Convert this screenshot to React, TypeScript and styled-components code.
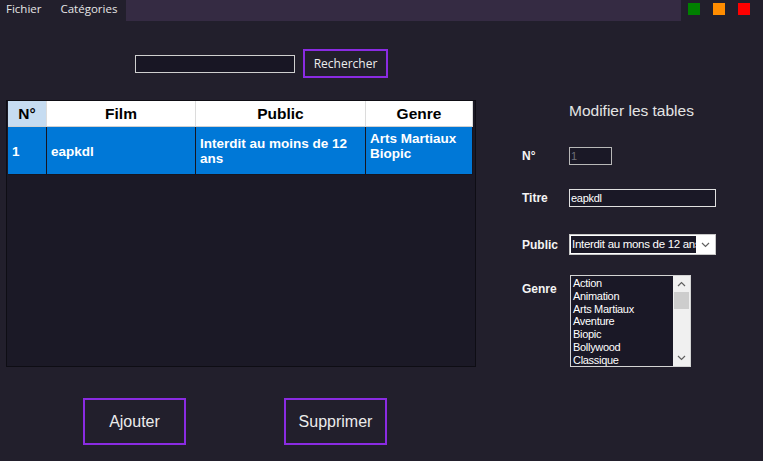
import React from "react";
import styled, { createGlobalStyle } from "styled-components";

const GlobalStyle = createGlobalStyle`
  html, body { margin: 0; padding: 0; background: #221f2c; }
  * { box-sizing: border-box; }
`;

const Window = styled.div`
  width: 763px;
  height: 461px;
  overflow: hidden;
  background: #221f2c;
  font-family: "Liberation Sans", Arial, sans-serif;
  color: #f0f0f0;
  display: flex;
  flex-direction: column;
`;

const MenuBar = styled.div`
  display: flex;
  height: 21px;
  flex-shrink: 0;
`;

const Menu = styled.nav`
  width: 126px;
  display: flex;
  gap: 19px;
  padding-left: 6px;
  font-family: "Open Sans", "Noto Sans", sans-serif;
  font-size: 11.5px;
  line-height: 17px;
  color: #e6e6e6;
`;

const MenuItem = styled.span``;

const TitleStrip = styled.div`
  width: 555px;
  background: #352b43;
`;

const Controls = styled.div`
  display: flex;
  gap: 13px;
  padding: 3px 0 0 7px;
`;

const Square = styled.span<{ $c: string }>`
  width: 12px;
  height: 12px;
  background: ${(p) => p.$c};
`;

const Body = styled.div`
  flex: 1;
  display: grid;
  grid-template-columns: 522px 1fr;
`;

const LeftCol = styled.div`
  padding-left: 6px;
  display: flex;
  flex-direction: column;
`;

const SearchRow = styled.div`
  margin-top: 28px;
  padding-left: 129px;
  display: flex;
  align-items: center;
  gap: 8px;
`;

const SearchInput = styled.div`
  width: 160px;
  height: 18px;
  background: #181624;
  border: 1px solid #cfcfcf;
`;

const SmallButton = styled.button`
  width: 85px;
  height: 29px;
  background: #221f2c;
  border: 2px solid #8a2be2;
  color: #ececec;
  font-family: "Open Sans", "Noto Sans", sans-serif;
  font-size: 12px;
  padding: 0;
`;

const Grid = styled.div`
  margin-top: 22px;
  width: 470px;
  height: 267px;
  background: #1b1926;
  border: 1px solid #0e0d14;
  padding: 0 2px 0 1px;
`;

const Row = styled.div`
  display: grid;
  grid-template-columns: 39px 149px 170px 107px;
`;

const HeadCell = styled.div<{ $selected?: boolean }>`
  height: 26px;
  background: ${(p) => (p.$selected ? "#c6dcf1" : "#ffffff")};
  border-right: 1px solid #dcdcdc;
  border-bottom: 1px solid #d0d0d0;
  color: #000;
  font-weight: bold;
  font-size: 15.5px;
  display: flex;
  align-items: center;
  justify-content: center;
`;

const Cell = styled.div<{ $top?: boolean }>`
  height: 48px;
  background: #0078d7;
  border-right: 1px solid #16151f;
  border-bottom: 1px solid #16151f;
  color: #ffffff;
  font-weight: bold;
  font-size: 13.5px;
  line-height: 15px;
  padding: ${(p) => (p.$top ? "4px 4px 0 4px" : "1px 4px 0 4px")};
  display: flex;
  align-items: ${(p) => (p.$top ? "flex-start" : "center")};
`;

const ButtonRow = styled.div`
  margin-top: 31px;
  padding-left: 77px;
  display: flex;
  gap: 98px;
`;

const BigButton = styled.button`
  width: 103px;
  height: 47px;
  background: #221f2c;
  border: 2px solid #8a2be2;
  color: #ececec;
  font-family: "Liberation Sans", Arial, sans-serif;
  font-size: 16px;
  padding: 0;
`;

const RightCol = styled.div`
  display: flex;
  flex-direction: column;
`;

const PanelTitle = styled.div`
  margin-top: 81px;
  padding-left: 47px;
  font-size: 15.5px;
  line-height: 18px;
  color: #e4e4e4;
`;

const FormRow = styled.div<{ $mt: number; $top?: boolean }>`
  margin-top: ${(p) => p.$mt}px;
  display: grid;
  grid-template-columns: 47px auto;
  align-items: ${(p) => (p.$top ? "start" : "center")};
`;

const Label = styled.div<{ $pt?: number }>`
  font-weight: bold;
  font-size: 12px;
  line-height: 14px;
  color: #f4f4f4;
  padding-top: ${(p) => p.$pt ?? 0}px;
`;

const TextBox = styled.div<{ $w: number; $dim?: boolean }>`
  width: ${(p) => p.$w}px;
  height: 18px;
  background: #1a1826;
  border: 1px solid ${(p) => (p.$dim ? "#b8b8b8" : "#e0e0e0")};
  padding-left: 1px;
  font-size: 11px;
  line-height: 16px;
  letter-spacing: -0.3px;
  color: ${(p) => (p.$dim ? "#6e6e78" : "#ffffff")};
`;

const SelectBox = styled.div`
  width: 147px;
  height: 21px;
  background: #ffffff;
  border: 1px solid #c8c8c8;
  padding: 1px;
  display: flex;
`;

const SelectValue = styled.div`
  flex: 1;
  background: #1a1826;
  color: #ffffff;
  font-size: 11.5px;
  line-height: 17px;
  letter-spacing: -0.3px;
  white-space: nowrap;
  overflow: hidden;
  padding-left: 1px;
`;

const SelectArrow = styled.div`
  width: 18px;
  display: flex;
  align-items: center;
  justify-content: center;
`;

const ListBox = styled.div`
  margin-left: 1px;
  width: 121px;
  height: 92px;
  background: #1a1826;
  border: 1px solid #d4d4d4;
  display: flex;
  overflow: hidden;
`;

const ListItems = styled.div`
  flex: 1;
  padding: 1px 0 0 2px;
  font-size: 11px;
  line-height: 12.8px;
  letter-spacing: -0.3px;
  color: #ffffff;
`;

const ListItem = styled.div`
  white-space: nowrap;
`;

const ScrollBar = styled.div`
  width: 17px;
  background: #f0f0f0;
  display: flex;
  flex-direction: column;
  align-items: center;
`;

const ScrollArrow = styled.div`
  height: 16px;
  width: 100%;
  display: flex;
  align-items: center;
  justify-content: center;
`;

const ScrollThumb = styled.div`
  width: 15px;
  height: 17px;
  background: #cdcdcd;
`;

const ScrollTrack = styled.div`
  flex: 1;
`;

const Chevron = ({ up }: { up?: boolean }) => (
  <svg width="9" height="6" viewBox="0 0 9 6">
    <polyline
      points={up ? "1,5 4.5,1.5 8,5" : "1,1 4.5,4.5 8,1"}
      fill="none"
      stroke="#606060"
      strokeWidth="1.2"
    />
  </svg>
);

const genres = [
  "Action",
  "Animation",
  "Arts Martiaux",
  "Aventure",
  "Biopic",
  "Bollywood",
  "Classique",
];

export default function App() {
  return (
    <>
      <GlobalStyle />
      <Window>
        <MenuBar>
          <Menu>
            <MenuItem>Fichier</MenuItem>
            <MenuItem>Catégories</MenuItem>
          </Menu>
          <TitleStrip />
          <Controls>
            <Square $c="#008000" />
            <Square $c="#ff8c00" />
            <Square $c="#ff0000" />
          </Controls>
        </MenuBar>
        <Body>
          <LeftCol>
            <SearchRow>
              <SearchInput />
              <SmallButton>Rechercher</SmallButton>
            </SearchRow>
            <Grid>
              <Row>
                <HeadCell $selected>N°</HeadCell>
                <HeadCell>Film</HeadCell>
                <HeadCell>Public</HeadCell>
                <HeadCell>Genre</HeadCell>
              </Row>
              <Row>
                <Cell>1</Cell>
                <Cell>eapkdl</Cell>
                <Cell>Interdit au moins de 12 ans</Cell>
                <Cell $top>
                  Arts Martiaux
                  <br />
                  Biopic
                </Cell>
              </Row>
            </Grid>
            <ButtonRow>
              <BigButton>Ajouter</BigButton>
              <BigButton>Supprimer</BigButton>
            </ButtonRow>
          </LeftCol>
          <RightCol>
            <PanelTitle>Modifier les tables</PanelTitle>
            <FormRow $mt={27}>
              <Label>N°</Label>
              <TextBox $w={43} $dim>
                1
              </TextBox>
            </FormRow>
            <FormRow $mt={24}>
              <Label>Titre</Label>
              <TextBox $w={147}>eapkdl</TextBox>
            </FormRow>
            <FormRow $mt={27}>
              <Label>Public</Label>
              <SelectBox>
                <SelectValue>Interdit au mons de 12 ans</SelectValue>
                <SelectArrow>
                  <Chevron />
                </SelectArrow>
              </SelectBox>
            </FormRow>
            <FormRow $mt={20} $top>
              <Label $pt={7}>Genre</Label>
              <ListBox>
                <ListItems>
                  {genres.map((g) => (
                    <ListItem key={g}>{g}</ListItem>
                  ))}
                </ListItems>
                <ScrollBar>
                  <ScrollArrow>
                    <Chevron up />
                  </ScrollArrow>
                  <ScrollThumb />
                  <ScrollTrack />
                  <ScrollArrow>
                    <Chevron />
                  </ScrollArrow>
                </ScrollBar>
              </ListBox>
            </FormRow>
          </RightCol>
        </Body>
      </Window>
    </>
  );
}
